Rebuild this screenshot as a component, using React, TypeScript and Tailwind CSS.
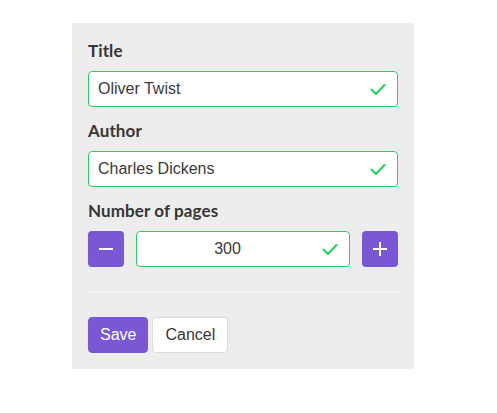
import { useState } from "react";

function Check() {
    return (
        <svg width="16" height="13" viewBox="0 0 16 13" fill="none" className="block">
            <path d="M1.5 6.5 L6 11 L14.5 2" stroke="#23d160" strokeWidth="2" strokeLinecap="round" strokeLinejoin="round" />
        </svg>
    );
}

function Field({ label, value }: { label: string; value: string }) {
    return (
        <div className="mb-3">
            <label className="block mb-2 text-[17px] leading-6 font-bold tracking-[0.1px] text-[#363636] [font-family:Lato,sans-serif]">
                {label}
            </label>
            <div className="relative">
                <input
                    defaultValue={value}
                    className="w-full h-9 rounded-[4px] border border-[#23d160] bg-white pl-[9px] pr-10 text-[16px] text-[#3a3a3a] outline-none"
                />
                <span className="absolute right-0 top-0 h-9 w-10 flex items-center justify-center">
                    <Check />
                </span>
            </div>
        </div>
    );
}

export default function App() {
    const [pages, setPages] = useState(300);

    return (
        <div className="min-h-screen bg-white [font-family:'Liberation_Sans',Arial,sans-serif]">
            <div className="ml-[72px] pt-[23px] w-[342px]">
                <div className="bg-[#ededed] p-4">
                    <Field label="Title" value="Oliver Twist" />
                    <Field label="Author" value="Charles Dickens" />
                    <div>
                        <label className="block mb-2 text-[17px] leading-6 font-bold tracking-[0.1px] text-[#363636] [font-family:Lato,sans-serif]">
                            Number of pages
                        </label>
                        <div className="flex gap-3">
                            <button
                                onClick={() => setPages(pages - 1)}
                                className="w-9 h-9 shrink-0 rounded-[4px] bg-[#7957d5] flex items-center justify-center"
                            >
                                <span className="block w-[14px] h-[2px] bg-white" />
                            </button>
                            <div className="relative flex-1">
                                <input
                                    value={pages}
                                    onChange={(e) => setPages(Number(e.target.value) || 0)}
                                    className="w-full h-9 rounded-[4px] border border-[#23d160] bg-white pl-[9px] pr-10 text-center text-[16px] text-[#3a3a3a] outline-none"
                                />
                                <span className="absolute right-0 top-0 h-9 w-10 flex items-center justify-center">
                                    <Check />
                                </span>
                            </div>
                            <button
                                onClick={() => setPages(pages + 1)}
                                className="relative w-9 h-9 shrink-0 rounded-[4px] bg-[#7957d5] flex items-center justify-center"
                            >
                                <span className="block w-[14px] h-[2px] bg-white" />
                                <span className="absolute block w-[2px] h-[14px] bg-white" />
                            </button>
                        </div>
                    </div>
                    <hr className="my-6 h-[2px] border-0 bg-[#f5f5f5]" />
                    <div className="flex gap-1">
                        <button className="h-9 px-[11px] rounded-[4px] border border-[#7957d5] bg-[#7957d5] text-white text-[16px]">
                            Save
                        </button>
                        <button className="h-9 px-3 rounded-[4px] border border-[#dbdbdb] bg-white text-[#363636] text-[16px]">
                            Cancel
                        </button>
                    </div>
                </div>
            </div>
        </div>
    );
}
